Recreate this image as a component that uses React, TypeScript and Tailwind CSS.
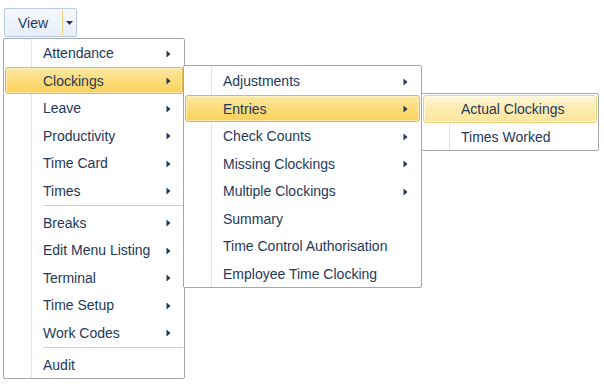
import React from 'react';

type Item = { label: string; sub?: boolean; state?: 'open' | 'hover' };
type Entry = Item | 'sep';

const mainMenu: Entry[] = [
  { label: 'Attendance', sub: true },
  { label: 'Clockings', sub: true, state: 'open' },
  { label: 'Leave', sub: true },
  { label: 'Productivity', sub: true },
  { label: 'Time Card', sub: true },
  { label: 'Times', sub: true },
  'sep',
  { label: 'Breaks', sub: true },
  { label: 'Edit Menu Listing', sub: true },
  { label: 'Terminal', sub: true },
  { label: 'Time Setup', sub: true },
  { label: 'Work Codes', sub: true },
  'sep',
  { label: 'Audit' },
];

const clockingsMenu: Entry[] = [
  { label: 'Adjustments', sub: true },
  { label: 'Entries', sub: true, state: 'open' },
  { label: 'Check Counts', sub: true },
  { label: 'Missing Clockings', sub: true },
  { label: 'Multiple Clockings', sub: true },
  { label: 'Summary' },
  { label: 'Time Control Authorisation' },
  { label: 'Employee Time Clocking' },
];

const entriesMenu: Entry[] = [
  { label: 'Actual Clockings', state: 'hover' },
  { label: 'Times Worked' },
];

const Arrow = () => (
  <svg width="5" height="8" viewBox="0 0 5 8" className="shrink-0">
    <polygon points="0.5,0.5 4.5,4 0.5,7.5" fill="#1e395b" />
  </svg>
);

const MenuRow = ({ item }: { item: Item }) => {
  // highlight styles: open submenu = strong gold, hover = pale gold
  const look =
    item.state === 'open'
      ? 'border-[#e2b64c] bg-gradient-to-b from-[#fde9a2] via-[#fcdb78] to-[#fbd25b] shadow-[inset_0_0_0_1px_rgba(255,248,215,0.6)]'
      : item.state === 'hover'
        ? 'border-[#efd07e] bg-gradient-to-b from-[#fef6d6] via-[#fdecb0] to-[#fce49c] shadow-[inset_0_0_0_1px_rgba(255,255,240,0.7)]'
        : 'border-transparent';
  return (
    <div className={`relative z-10 mx-[1px] flex h-[27.5px] items-center rounded-[3px] border pt-[2px] pr-[11px] pl-[37px] ${look}`}>
      <span className="flex-1 whitespace-nowrap">{item.label}</span>
      {item.sub && <Arrow />}
    </div>
  );
};

// position classes come from the caller (relative for the root menu, absolute for popouts)
const Menu = ({ entries, className }: { entries: Entry[]; className: string }) => (
  <div className={`rounded-[2px] border border-[#a3a8ae] bg-white ${className}`}>
    {/* icon gutter */}
    <div className="absolute top-0 bottom-0 left-[27px] w-[2px] border-l border-[#e3e5e8] bg-white" />
    {entries.map((e, i) =>
      e === 'sep' ? (
        <div key={i} className="relative flex h-[4.5px] items-center pl-[39px] pr-[1px]">
          <div className="h-[2px] w-full border-t border-[#c4cedb] bg-white" />
        </div>
      ) : (
        <MenuRow key={i} item={e} />
      ),
    )}
  </div>
);

export default function App() {
  return (
    <div
      className="relative h-[387px] w-[604px] overflow-hidden bg-white text-[14px] text-[#1e395b]"
      style={{ fontFamily: '"Liberation Sans", Arial, sans-serif' }}
    >
      {/* View split button */}
      <div className="ml-[4px] mt-[8px] flex h-[29px] w-[73px] rounded-[2px] border border-[#b8cae3] bg-gradient-to-b from-[#f5f8fd] to-[#e8effa]">
        <div className="flex flex-1 items-center justify-center pt-[1px] pr-[1px]">View</div>
        <div className="my-[1px] w-px bg-[#f3d27e]" />
        <div className="flex w-[13px] items-center justify-center pt-[1px]">
          <svg width="7" height="4" viewBox="0 0 7 4">
            <polygon points="0,0 7,0 3.5,4" fill="#1e395b" />
          </svg>
        </div>
      </div>

      <Menu entries={mainMenu} className="relative ml-[3px] mt-[1px] w-[182px]" />

      <Menu entries={clockingsMenu} className="absolute left-[183px] top-[65px] z-20 w-[239px] pt-[1px]" />

      <Menu entries={entriesMenu} className="absolute left-[421px] top-[93px] z-30 w-[178px] pt-[1px]" />
    </div>
  );
}
